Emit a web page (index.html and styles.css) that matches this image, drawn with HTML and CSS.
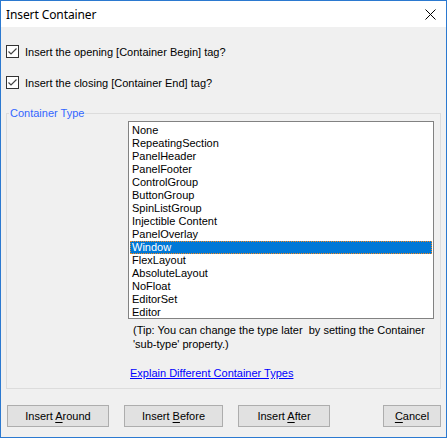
FILE: index.html
```html
<!DOCTYPE html>
<html lang="en">
<head>
<meta charset="utf-8">
<title>Insert Container</title>
<link rel="stylesheet" href="styles.css">
</head>
<body>
<div class="window">
  <div class="titlebar">
    <span class="title">Insert Container</span>
    <svg class="close" width="11" height="11" viewBox="0 0 11 11" aria-hidden="true">
      <path d="M0.5 0.5 L10.5 10.5 M10.5 0.5 L0.5 10.5" stroke="#000" stroke-width="1" fill="none"/>
    </svg>
  </div>
  <div class="content">
    <label class="check-row">
      <svg class="checkbox" width="13" height="13" viewBox="0 0 13 13" aria-hidden="true">
        <rect x="0.5" y="0.5" width="12" height="12" fill="#fff" stroke="#333"/>
        <path d="M2.5 6.5 L5 9 L10.5 3.5" stroke="#444" stroke-width="1.2" fill="none"/>
      </svg>
      <span>Insert the opening [Container Begin] tag?</span>
    </label>
    <label class="check-row second">
      <svg class="checkbox" width="13" height="13" viewBox="0 0 13 13" aria-hidden="true">
        <rect x="0.5" y="0.5" width="12" height="12" fill="#fff" stroke="#333"/>
        <path d="M2.5 6.5 L5 9 L10.5 3.5" stroke="#444" stroke-width="1.2" fill="none"/>
      </svg>
      <span>Insert the closing [Container End] tag?</span>
    </label>

    <fieldset class="group">
      <legend class="group-label">Container Type</legend>
      <ul class="listbox">
        <li>None</li>
        <li>RepeatingSection</li>
        <li>PanelHeader</li>
        <li>PanelFooter</li>
        <li>ControlGroup</li>
        <li>ButtonGroup</li>
        <li>SpinListGroup</li>
        <li>Injectible Content</li>
        <li>PanelOverlay</li>
        <li class="selected">Window</li>
        <li>FlexLayout</li>
        <li>AbsoluteLayout</li>
        <li>NoFloat</li>
        <li>EditorSet</li>
        <li>Editor</li>
      </ul>
      <p class="tip">(Tip: You can change the type later&nbsp; by setting the Container<br>'sub-type' property.)</p>
      <a class="explain" href="#">Explain Different Container Types</a>
    </fieldset>

    <div class="buttons">
      <button class="btn btn-around">Insert <u>A</u>round</button>
      <button class="btn btn-before">Insert <u>B</u>efore</button>
      <button class="btn btn-after">Insert <u>A</u>fter</button>
      <button class="btn btn-cancel"><u>C</u>ancel</button>
    </div>
  </div>
</div>
</body>
</html>
```

FILE: styles.css
```css
html, body {
  margin: 0;
  padding: 0;
  background: #f0f0f0;
}

.window {
  width: 447px;
  height: 438px;
  box-sizing: border-box;
  border: 1px solid #2b79d0;
  display: flex;
  flex-direction: column;
  font-family: "Liberation Sans", Arial, sans-serif;
  font-size: 11px;
  color: #000;
}

.titlebar {
  height: 26px;
  background: #fff;
  display: flex;
  align-items: center;
  justify-content: space-between;
  padding: 0 10px 0 5px;
}

.title {
  font-family: "Noto Sans", "Open Sans", sans-serif;
  font-size: 12px;
  letter-spacing: -0.1px;
}

.close {
  display: block;
}

.content {
  flex: 1;
  background: #f0f0f0;
  padding: 0 5px;
  display: flex;
  flex-direction: column;
}

.check-row {
  display: flex;
  align-items: center;
  gap: 6px;
  height: 13px;
  margin-top: 18px;
}

.check-row.second {
  margin-top: 18px;
}

.checkbox {
  display: block;
  flex: none;
}

.group {
  margin: 18px 0 0;
  padding: 0 0 8px;
  border: 1px solid #dcdcdc;
  min-inline-size: 0;
}

.group-label {
  margin-left: 2px;
  padding: 0 1px;
  font-size: 11px;
  line-height: 13px;
  color: #3366ff;
}

.listbox {
  list-style: none;
  margin: 1px 0 0 121px;
  padding: 2px 0 0;
  width: 306px;
  height: 198px;
  box-sizing: border-box;
  border: 1px solid #828282;
  background: #fff;
  overflow: hidden;
}

.listbox li {
  height: 13px;
  line-height: 13px;
  padding-left: 2px;
  margin: 0 1px;
  box-sizing: border-box;
  white-space: nowrap;
}

.listbox li.selected {
  background: #0078d7;
  color: #fff;
  outline: 1px dotted #f7891c;
  outline-offset: -1px;
}

.tip {
  margin: 4px 0 0 126px;
  line-height: 14px;
}

.explain {
  display: block;
  margin: 15px 0 0 123px;
  line-height: 14px;
  color: #0000ff;
  text-decoration: underline;
  width: max-content;
}

.buttons {
  display: flex;
  margin-top: 16px;
  padding: 0 0 0 1px;
}

.btn {
  height: 22px;
  box-sizing: border-box;
  border: 1px solid #adadad;
  background: #e1e1e1;
  font-family: "Liberation Sans", Arial, sans-serif;
  font-size: 11px;
  color: #000;
  padding: 0;
  margin: 0;
}

.btn u {
  text-decoration-thickness: 1px;
  text-underline-offset: 2px;
}

.btn-around { width: 102px; }
.btn-before { width: 99px; margin-left: 15px; }
.btn-after  { width: 92px; margin-left: 15px; }
.btn-cancel { width: 58px; margin-left: auto; }
```
